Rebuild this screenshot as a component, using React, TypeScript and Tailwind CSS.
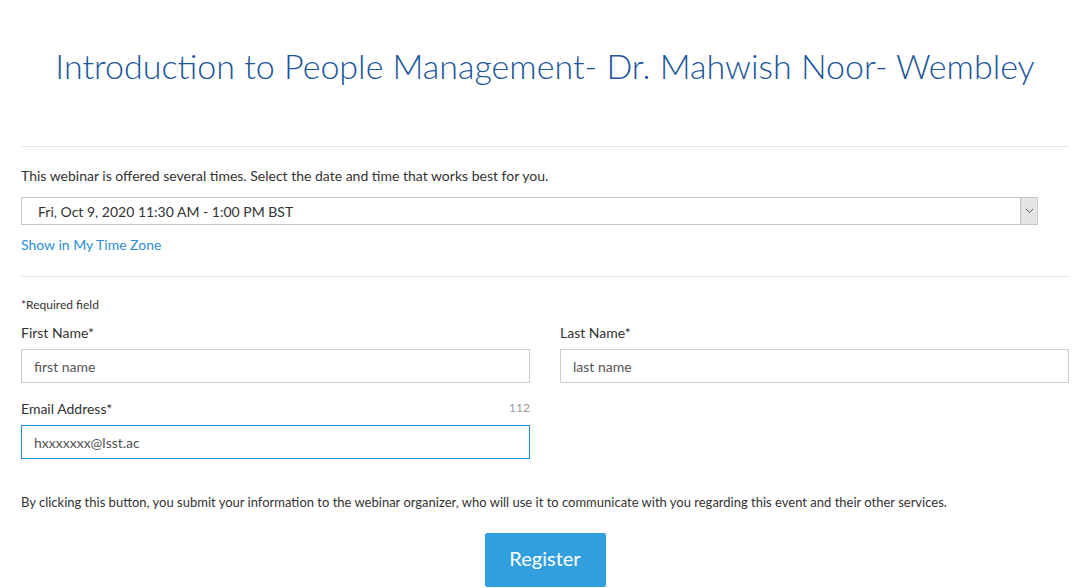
import React from 'react';

const Field: React.FC<{ label: string; value: string; counter?: string; focused?: boolean }> = ({
  label,
  value,
  counter,
  focused,
}) => (
  <div className="flex flex-col">
    <div className="flex items-center justify-between h-[20px]">
      <span className="text-[14px] text-[#333]">{label}</span>
      {counter && <span className="text-[12px] text-[#999]">{counter}</span>}
    </div>
    <div
      className={`mt-[7px] h-[34px] flex items-center px-[12px] text-[14px] text-[#555] border ${
        focused ? 'border-[#1a8ed8]' : 'border-[#ccc]'
      }`}
    >
      {value}
    </div>
  </div>
);

export default function App() {
  return (
    <div className="w-[1078px] h-[588px] overflow-hidden bg-white" style={{ fontFamily: 'Lato, "Open Sans", sans-serif' }}>
      <div className="mx-[21px] w-[1048px]">
        <h1 className="pt-[44px] text-center text-[34px] leading-[44px] font-light text-[#1b5599]">
          Introduction to People Management- Dr. Mahwish Noor- Wembley
        </h1>
        <div className="mt-[58px] border-t border-[#e6e6e6]" />

        <p className="mt-[19px] text-[14px] leading-[20px] text-[#333]">
          This webinar is offered several times. Select the date and time that works best for you.
        </p>
        <div className="mt-[11px] w-[1017px] h-[28px] border border-[#c8c8c8] flex items-center">
          <span className="flex-1 pl-[16px] text-[14px] text-[#333]">Fri, Oct 9, 2020 11:30 AM - 1:00 PM BST</span>
          <div className="w-[17px] h-[26px] bg-[#e4e4e4] border-l border-[#bbb] flex items-center justify-center">
            <svg width="9" height="6" viewBox="0 0 9 6" fill="none">
              <path d="M1 1l3.5 3.5L8 1" stroke="#555" strokeWidth="1" />
            </svg>
          </div>
        </div>
        <a className="block mt-[10px] text-[14px] leading-[20px] text-[#2d8ed6]">Show in My Time Zone</a>
        <div className="mt-[21px] border-t border-[#e6e6e6]" />

        <p className="mt-[20px] text-[12px] leading-[16px] text-[#333]">*Required field</p>
        <div className="mt-[9px] grid grid-cols-2 gap-x-[30px] gap-y-[15px]">
          <Field label="First Name*" value="first name" />
          <Field label="Last Name*" value="last name" />
          <Field label="Email Address*" value="hxxxxxxx@lsst.ac" counter="112" focused />
        </div>

        <p className="mt-[34px] text-[13px] leading-[18px] text-[#333]">
          By clicking this button, you submit your information to the webinar organizer, who will use it to communicate with you regarding this event and their other services.
        </p>
        <div className="mt-[22px] flex justify-center">
          <button className="w-[121px] h-[54px] pb-[4px] bg-[#319fdd] text-white text-[20px] rounded-[2px]">Register</button>
        </div>
      </div>
    </div>
  );
}
